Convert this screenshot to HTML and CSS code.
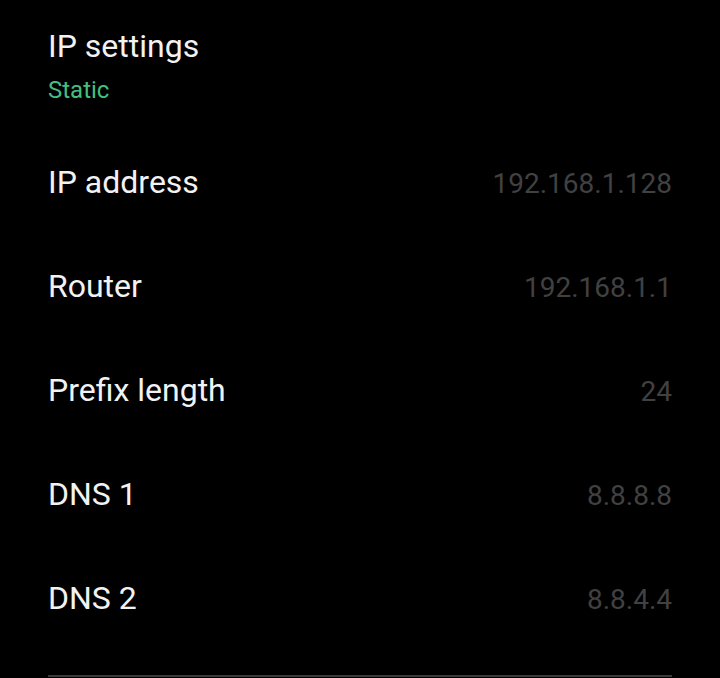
FILE: index.html
```html
<!DOCTYPE html>
<html lang="en">

<head>
    <meta charset="UTF-8">
    <meta name="viewport" content="width=device-width, initial-scale=1.0">
    <title>IP settings</title>
    <link rel="stylesheet" href="styles.css">
</head>

<body>
    <div id="page">
        <div class="header">
            <div class="title">IP settings</div>
            <div class="mode">Static</div>
        </div>

        <div class="row">
            <span class="label">IP address</span>
            <span class="value">192.168.1.128</span>
        </div>
        <div class="row">
            <span class="label">Router</span>
            <span class="value">192.168.1.1</span>
        </div>
        <div class="row">
            <span class="label">Prefix length</span>
            <span class="value">24</span>
        </div>
        <div class="row">
            <span class="label">DNS 1</span>
            <span class="value">8.8.8.8</span>
        </div>
        <div class="row">
            <span class="label">DNS 2</span>
            <span class="value">8.8.4.4</span>
        </div>

        <div class="divider"></div>
    </div>
</body>
</html>
```

FILE: styles.css
```css
html, body {
    margin: 0;
    background-color: #000;
    font-family: Roboto, "Noto Sans", sans-serif;
}

#page {
    padding: 26px 48px 0 48px;
}

.header {
    display: flex;
    flex-direction: column;
    gap: 8px;
    margin-bottom: 24px;
}

.title {
    color: #f2f2f2;
    font-size: 32px;
    line-height: 40px;
}

.mode {
    color: #45bf7e;
    font-size: 24px;
    line-height: 32px;
}

.row {
    display: flex;
    justify-content: space-between;
    align-items: baseline;
    height: 104px;
    padding-top: 32px;
    box-sizing: border-box;
}

.label {
    color: #f2f2f2;
    font-size: 32px;
    line-height: 40px;
}

.value {
    color: #414141;
    font-size: 28px;
    line-height: 40px;
}

.divider {
    margin-top: 25px;
    height: 2px;
    background-color: #3a3a3a;
}
```
